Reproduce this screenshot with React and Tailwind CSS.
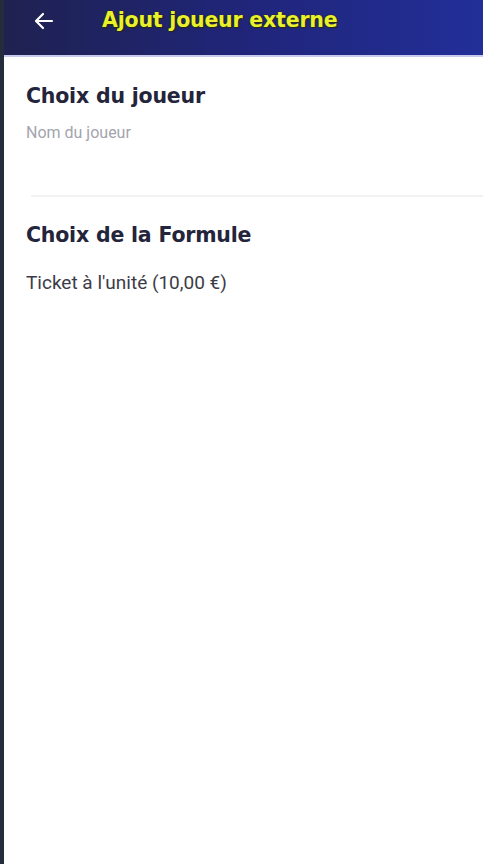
import React from "react";

export default function App() {
  return (
    <div className="flex h-[864px] w-[483px] overflow-hidden bg-[#232d3b]">
      <div className="w-[4px] shrink-0 bg-[#232d3b]" />
      <div className="flex flex-1 flex-col bg-white">
        <div className="flex h-[55px] items-center bg-gradient-to-r from-[#1f2150] via-[#20257a] to-[#222f98] pb-[14px]">
          <svg className="ml-[28px] h-[24px] w-[24px]" viewBox="0 0 24 24" fill="none" stroke="white" strokeWidth="2.2" strokeLinecap="round" strokeLinejoin="round">
            <path d="M20 12H5" />
            <path d="M11 5l-7 7 7 7" />
          </svg>
          <span
            className="ml-[46px] text-[20.5px] font-bold tracking-[-0.2px] text-[#e9f12c] [text-shadow:0_0_2px_#2a2a10,1px_1px_1px_#2a2a10]"
            style={{ fontFamily: "'DejaVu Sans', sans-serif" }}
          >
            Ajout joueur externe
          </span>
        </div>
        <div className="h-[2px] bg-[#c7c9ee]" />
        <div className="flex flex-col">
          <div className="px-[22px] pt-[26px]">
            <h2 className="text-[20.5px] font-bold leading-[26px] tracking-[-0.2px] text-[#24243a]" style={{ fontFamily: "'DejaVu Sans', sans-serif" }}>
              Choix du joueur
            </h2>
            <p className="mt-[12px] text-[16px] text-[#a4a4ae]" style={{ fontFamily: "Roboto, sans-serif" }}>
              Nom du joueur
            </p>
          </div>
          <div className="ml-[27px] mt-[50px] h-[2px] bg-[#f2f2f2]" />
          <div className="px-[22px] pt-[25px]">
            <h2 className="text-[20.5px] font-bold leading-[26px] tracking-[-0.2px] text-[#24243a]" style={{ fontFamily: "'DejaVu Sans', sans-serif" }}>
              Choix de la Formule
            </h2>
            <p className="mt-[21px] text-[19px] text-[#3c3c48]" style={{ fontFamily: "Roboto, sans-serif" }}>
              Ticket à l'unité (10,00 €)
            </p>
          </div>
        </div>
      </div>
    </div>
  );
}
